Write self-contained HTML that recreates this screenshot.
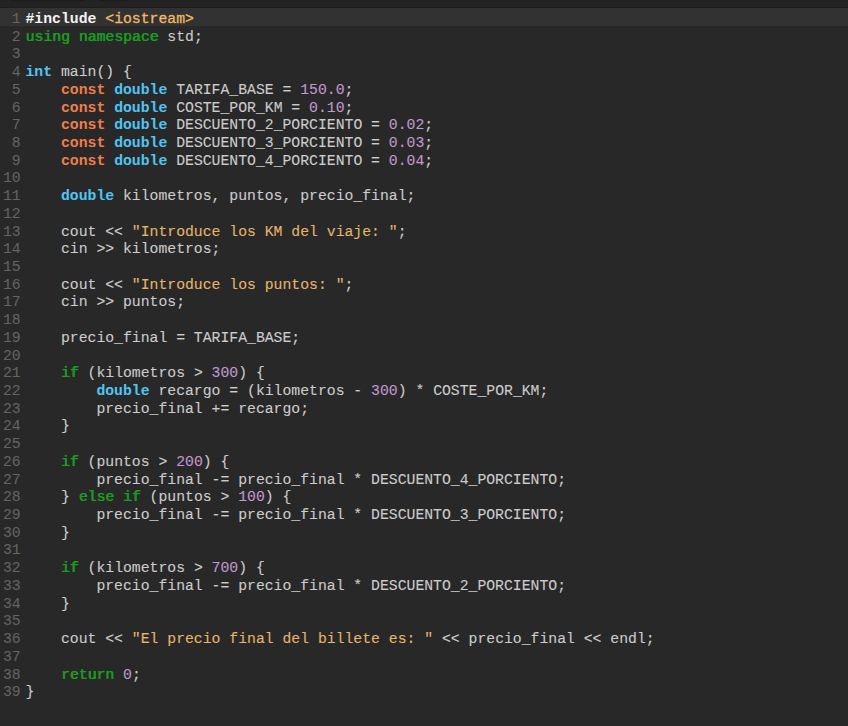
<!DOCTYPE html>
<html><head><meta charset="utf-8"><style>
html,body{margin:0;padding:0;}
body{width:848px;height:726px;overflow:hidden;background:#282828;position:relative;font-family:"Liberation Mono",monospace;font-size:14.78px;line-height:17.74px;}
#topbar{position:absolute;left:0;top:0;width:848px;height:7px;background:#232323;}
#tbline{position:absolute;left:0;top:7px;width:848px;height:1px;background:#1c1c1c;}
.seg{position:absolute;top:0;height:1px;background:#1a1a1a;}
#hl{position:absolute;left:0;top:8px;width:848px;height:17.75px;background:#323232;}
.ln{position:absolute;right:827.3px;color:#636363;white-space:pre;letter-spacing:0px;-webkit-text-stroke:0.1px currentColor;}
.cl{position:absolute;left:25.5px;color:#cccccc;white-space:pre;letter-spacing:0px;-webkit-text-stroke:0.1px currentColor;}
.cl .t,.cl .c,.cl .pp{-webkit-text-stroke:0px currentColor;}
.cl .inc{-webkit-text-stroke:0.3px currentColor;}
.cl .k{-webkit-text-stroke:0.2px currentColor;text-shadow:0.6px 0 0 currentColor;}
.pp{color:#f4f4f4;font-weight:bold;}
.inc{color:#f0b964;}
.s{color:#e4b56b;}
.k{color:#1a9b22;}
.t{color:#50c5f2;font-weight:bold;}
.c{color:#ee7d4c;font-weight:bold;}
.n{color:#c198d0;}
</style></head><body>
<div id="topbar"></div><div id="tbline"></div>
<div class="seg" style="left:10px;width:75px"></div><div class="seg" style="left:99px;width:28px"></div>
<div id="hl"></div>
<div class="ln" style="top:11.00px">1</div><div class="cl" style="top:11.00px"><span class="pp">#include</span> <span class="inc">&lt;iostream&gt;</span></div>
<div class="ln" style="top:29.00px">2</div><div class="cl" style="top:29.00px"><span class="k">using</span> <span class="k">namespace</span> std;</div>
<div class="ln" style="top:46.00px">3</div><div class="cl" style="top:46.00px"></div>
<div class="ln" style="top:64.00px">4</div><div class="cl" style="top:64.00px"><span class="t">int</span> main() {</div>
<div class="ln" style="top:82.00px">5</div><div class="cl" style="top:82.00px">    <span class="c">const</span> <span class="t">double</span> TARIFA_BASE = <span class="n">150.0</span>;</div>
<div class="ln" style="top:100.00px">6</div><div class="cl" style="top:100.00px">    <span class="c">const</span> <span class="t">double</span> COSTE_POR_KM = <span class="n">0.10</span>;</div>
<div class="ln" style="top:117.00px">7</div><div class="cl" style="top:117.00px">    <span class="c">const</span> <span class="t">double</span> DESCUENTO_2_PORCIENTO = <span class="n">0.02</span>;</div>
<div class="ln" style="top:135.00px">8</div><div class="cl" style="top:135.00px">    <span class="c">const</span> <span class="t">double</span> DESCUENTO_3_PORCIENTO = <span class="n">0.03</span>;</div>
<div class="ln" style="top:153.00px">9</div><div class="cl" style="top:153.00px">    <span class="c">const</span> <span class="t">double</span> DESCUENTO_4_PORCIENTO = <span class="n">0.04</span>;</div>
<div class="ln" style="top:170.00px">10</div><div class="cl" style="top:170.00px"></div>
<div class="ln" style="top:188.00px">11</div><div class="cl" style="top:188.00px">    <span class="t">double</span> kilometros, puntos, precio_final;</div>
<div class="ln" style="top:206.00px">12</div><div class="cl" style="top:206.00px"></div>
<div class="ln" style="top:224.00px">13</div><div class="cl" style="top:224.00px">    cout &lt;&lt; <span class="s">&quot;Introduce los KM del viaje: &quot;</span>;</div>
<div class="ln" style="top:241.00px">14</div><div class="cl" style="top:241.00px">    cin &gt;&gt; kilometros;</div>
<div class="ln" style="top:259.00px">15</div><div class="cl" style="top:259.00px"></div>
<div class="ln" style="top:277.00px">16</div><div class="cl" style="top:277.00px">    cout &lt;&lt; <span class="s">&quot;Introduce los puntos: &quot;</span>;</div>
<div class="ln" style="top:294.00px">17</div><div class="cl" style="top:294.00px">    cin &gt;&gt; puntos;</div>
<div class="ln" style="top:312.00px">18</div><div class="cl" style="top:312.00px"></div>
<div class="ln" style="top:330.00px">19</div><div class="cl" style="top:330.00px">    precio_final = TARIFA_BASE;</div>
<div class="ln" style="top:348.00px">20</div><div class="cl" style="top:348.00px"></div>
<div class="ln" style="top:365.00px">21</div><div class="cl" style="top:365.00px">    <span class="k">if</span> (kilometros &gt; <span class="n">300</span>) {</div>
<div class="ln" style="top:383.00px">22</div><div class="cl" style="top:383.00px">        <span class="t">double</span> recargo = (kilometros - <span class="n">300</span>) * COSTE_POR_KM;</div>
<div class="ln" style="top:401.00px">23</div><div class="cl" style="top:401.00px">        precio_final += recargo;</div>
<div class="ln" style="top:418.00px">24</div><div class="cl" style="top:418.00px">    }</div>
<div class="ln" style="top:436.00px">25</div><div class="cl" style="top:436.00px"></div>
<div class="ln" style="top:454.00px">26</div><div class="cl" style="top:454.00px">    <span class="k">if</span> (puntos &gt; <span class="n">200</span>) {</div>
<div class="ln" style="top:472.00px">27</div><div class="cl" style="top:472.00px">        precio_final -= precio_final * DESCUENTO_4_PORCIENTO;</div>
<div class="ln" style="top:489.00px">28</div><div class="cl" style="top:489.00px">    } <span class="k">else</span> <span class="k">if</span> (puntos &gt; <span class="n">100</span>) {</div>
<div class="ln" style="top:507.00px">29</div><div class="cl" style="top:507.00px">        precio_final -= precio_final * DESCUENTO_3_PORCIENTO;</div>
<div class="ln" style="top:525.00px">30</div><div class="cl" style="top:525.00px">    }</div>
<div class="ln" style="top:542.00px">31</div><div class="cl" style="top:542.00px"></div>
<div class="ln" style="top:560.00px">32</div><div class="cl" style="top:560.00px">    <span class="k">if</span> (kilometros &gt; <span class="n">700</span>) {</div>
<div class="ln" style="top:578.00px">33</div><div class="cl" style="top:578.00px">        precio_final -= precio_final * DESCUENTO_2_PORCIENTO;</div>
<div class="ln" style="top:596.00px">34</div><div class="cl" style="top:596.00px">    }</div>
<div class="ln" style="top:613.00px">35</div><div class="cl" style="top:613.00px"></div>
<div class="ln" style="top:631.00px">36</div><div class="cl" style="top:631.00px">    cout &lt;&lt; <span class="s">&quot;El precio final del billete es: &quot;</span> &lt;&lt; precio_final &lt;&lt; endl;</div>
<div class="ln" style="top:649.00px">37</div><div class="cl" style="top:649.00px"></div>
<div class="ln" style="top:667.00px">38</div><div class="cl" style="top:667.00px">    <span class="k">return</span> <span class="n">0</span>;</div>
<div class="ln" style="top:684.00px">39</div><div class="cl" style="top:684.00px">}</div>
</body></html>
